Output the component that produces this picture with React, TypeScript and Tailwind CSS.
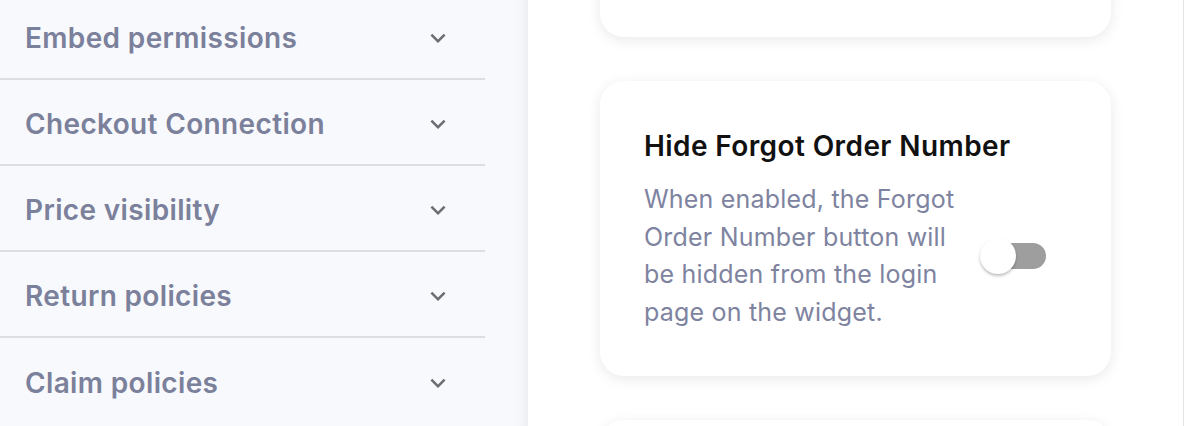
import { ReactNode } from 'react';

const sections = [
  'Embed permissions',
  'Checkout Connection',
  'Price visibility',
  'Return policies',
  'Claim policies',
];

const Chevron = () => (
  <svg width="30" height="30" viewBox="0 0 24 24" className="shrink-0">
    <path d="M7.41 8.59 12 13.17l4.59-4.58L18 10l-6 6-6-6z" fill="#6b6d73" />
  </svg>
);

const Card = ({ className, children }: { className?: string; children?: ReactNode }) => (
  <div
    className={`w-[511px] shrink-0 rounded-[24px] bg-white shadow-[0_3px_14px_rgba(0,0,0,0.09)] ${className ?? ''}`}
  >
    {children}
  </div>
);

export default function App() {
  return (
    <div
      className="flex h-[426px] w-[1184px] overflow-hidden bg-white"
      style={{ fontFamily: 'Inter, "Noto Sans", sans-serif' }}
    >
      {/* Sidebar */}
      <div className="h-full w-[528px] shrink-0 bg-[#f8f9fd] shadow-[inset_-14px_0_14px_-12px_rgba(0,0,0,0.07)]">
        <div className="-mt-[6px] w-[485px]">
          {sections.map((item, i) => (
            <div
              key={item}
              className={`flex h-[86px] items-center justify-between pt-[4px] pl-[25px] pr-[32px] ${
                i < sections.length - 1 ? 'border-b-2 border-[#dddee2]' : ''
              }`}
            >
              <span className="text-[28px] leading-[34px] font-semibold tracking-[0.35px] text-[#7b809b]">
                {item}
              </span>
              <Chevron />
            </div>
          ))}
        </div>
      </div>

      {/* Main */}
      <div className="flex flex-1 flex-col gap-[44px] pl-[72px]">
        <Card className="-mt-[83px] h-[120px]" />
        <Card className="px-[44px] pt-[49px] pb-[45px]">
          <h3 className="text-[28px] leading-[32px] font-semibold tracking-[0.4px] text-[#111111]">
            Hide Forgot Order Number
          </h3>
          <div className="mt-[19px] flex items-center">
            <p className="w-[324px] text-[25px] leading-[37.5px] tracking-[0.2px] text-[#7e83a0]">
              When enabled, the Forgot Order Number button will be hidden from the login page on the widget.
            </p>
            <div className="relative ml-[12px] h-[36px] w-[66px]">
              <div className="absolute top-[5px] right-0 h-[26px] w-[50px] rounded-full bg-[#9e9e9e]" />
              <div className="absolute top-0 left-0 h-[36px] w-[36px] rounded-full bg-white shadow-[0_2px_3px_rgba(0,0,0,0.25)]" />
            </div>
          </div>
        </Card>
        <Card className="h-[200px]" />
      </div>
      <div className="h-full w-px bg-[#e4e4e4]" />
    </div>
  );
}
